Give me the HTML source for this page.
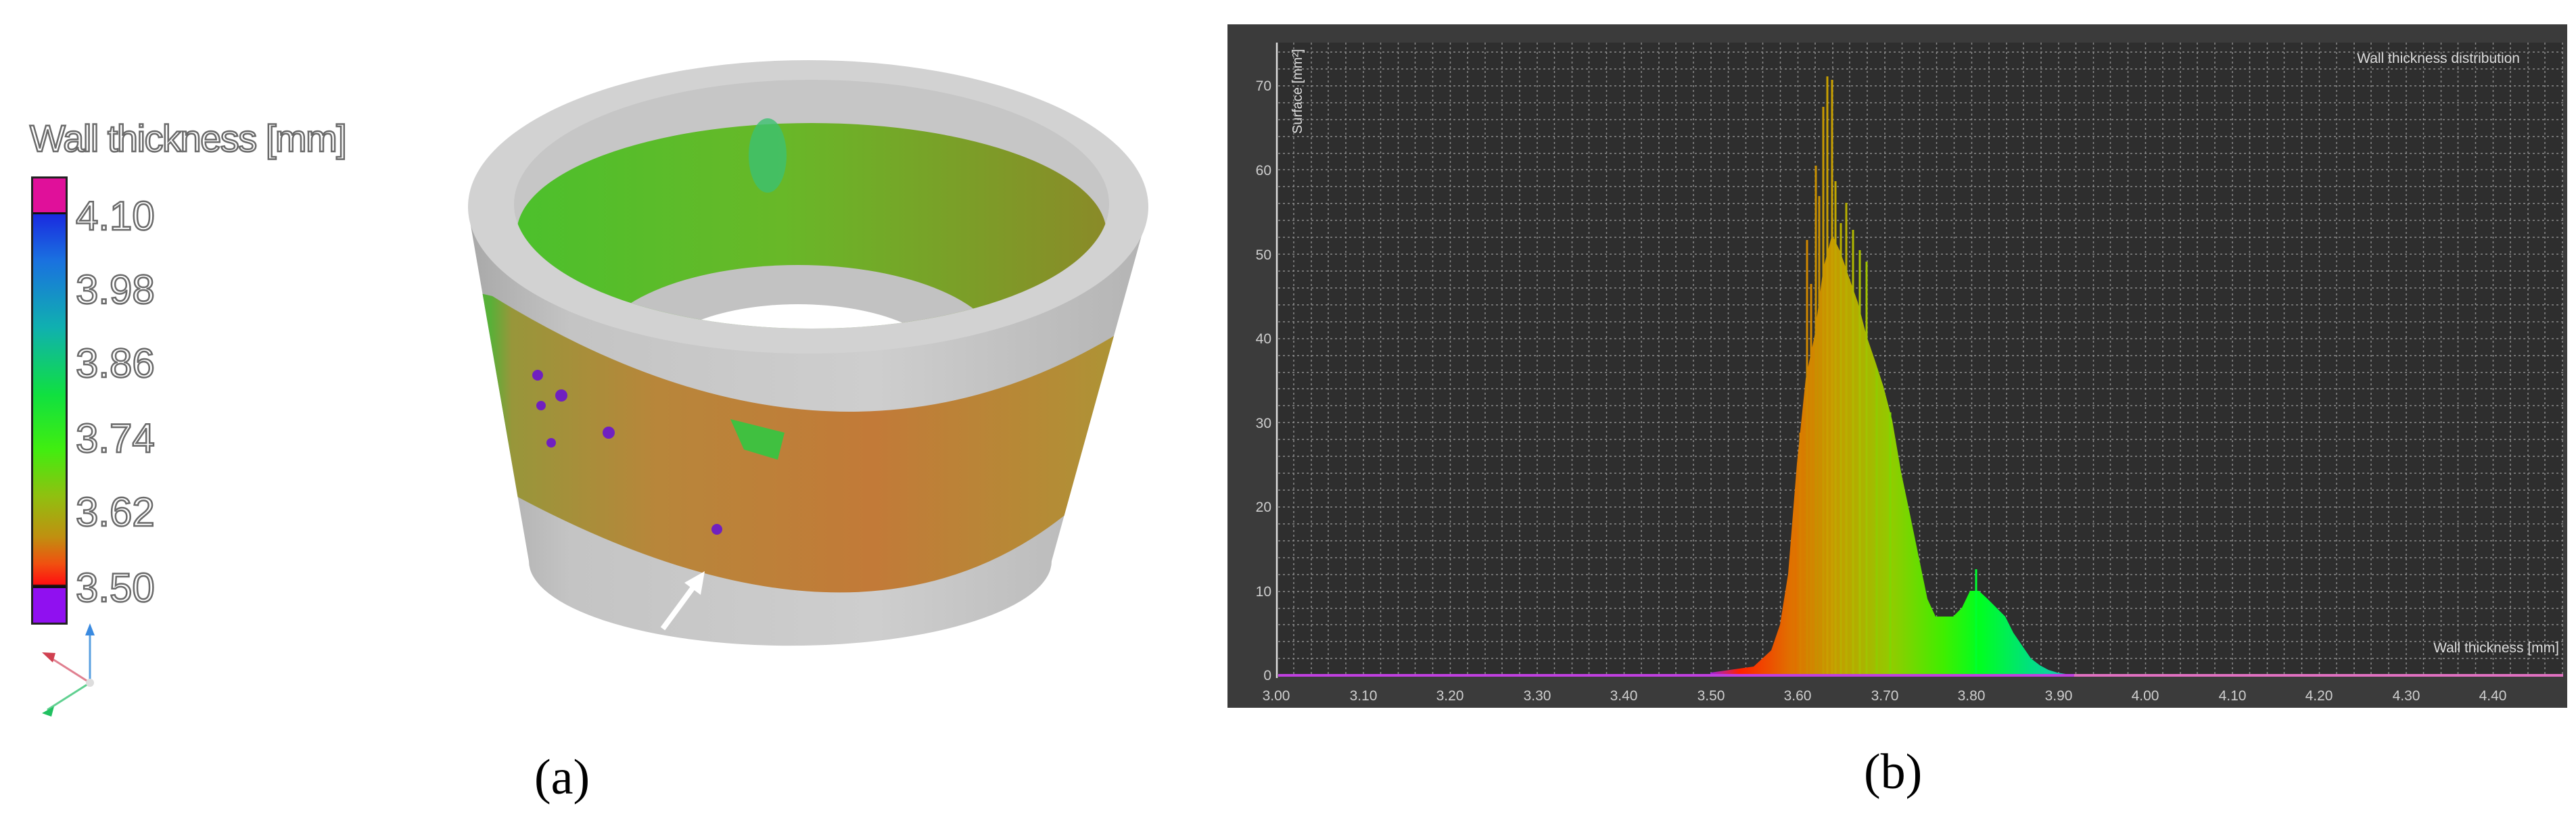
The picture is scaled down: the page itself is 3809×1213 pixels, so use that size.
<!DOCTYPE html>
<html><head><meta charset="utf-8"><style>
html,body{margin:0;padding:0;background:#fff;}
body{width:3809px;height:1213px;position:relative;overflow:hidden;font-family:"Liberation Sans",sans-serif;}
.t{position:absolute;color:#fff;-webkit-text-stroke:2.5px #6a6a6a;font-family:"Liberation Sans",sans-serif;white-space:nowrap;}
.cap{position:absolute;font-family:"Liberation Serif",serif;font-size:74px;color:#000;}
</style></head><body>

<div class="t" style="left:44px;top:172px;font-size:56px;letter-spacing:-1.5px;">Wall thickness [mm]</div>
<div style="position:absolute;left:46px;top:261px;width:48px;height:657px;border:3px solid #222;background:linear-gradient(#e0109a 0,#e0109a 50px,#111 50px,#111 53px,#1a2ae0 53px,#1a70e0 120px,#10b0b0 220px,#10e040 320px,#40ee10 400px,#90c010 470px,#c09010 530px,#f05010 570px,#ff1010 600px,#111 602px,#111 606px,#9010f0 606px);"></div>
<div class="t" style="left:112px;top:285px;font-size:60px;">4.10</div>
<div class="t" style="left:112px;top:394px;font-size:60px;">3.98</div>
<div class="t" style="left:112px;top:503px;font-size:60px;">3.86</div>
<div class="t" style="left:112px;top:614px;font-size:60px;">3.74</div>
<div class="t" style="left:112px;top:723px;font-size:60px;">3.62</div>
<div class="t" style="left:112px;top:835px;font-size:60px;">3.50</div>

<svg width="3809" height="1213" style="position:absolute;left:0;top:0">
<defs>
<clipPath id="body"><path d="M693,316 L782,830 A386,125 0 0 0 1555,830 L1697,316 Z"/></clipPath>
<clipPath id="inner"><ellipse cx="1200" cy="302" rx="440" ry="184"/></clipPath>
<linearGradient id="band" x1="0" x2="1" y1="0" y2="0">
<stop offset="0" stop-color="#4cb838"/><stop offset="0.07" stop-color="#58b038"/><stop offset="0.1" stop-color="#98963a"/><stop offset="0.3" stop-color="#b8863a"/><stop offset="0.6" stop-color="#c27a38"/><stop offset="0.85" stop-color="#b48c36"/><stop offset="1" stop-color="#a89a34"/>
</linearGradient>
<linearGradient id="inw" x1="0" x2="1" y1="0" y2="0">
<stop offset="0" stop-color="#4cc02c"/><stop offset="0.45" stop-color="#68b828"/><stop offset="1" stop-color="#8a8a28"/>
</linearGradient>
<linearGradient id="side" x1="0" x2="1" y1="0" y2="0">
<stop offset="0" stop-color="#a8a8a8"/><stop offset="0.15" stop-color="#c4c4c4"/><stop offset="0.6" stop-color="#cecece"/><stop offset="1" stop-color="#b4b4b4"/>
</linearGradient>
<linearGradient id="hist" gradientUnits="userSpaceOnUse" x1="2529" x2="3067" y1="0" y2="0">
<stop offset="0" stop-color="#a020e0"/><stop offset="0.08" stop-color="#ff2000"/><stop offset="0.22" stop-color="#e07000"/><stop offset="0.36" stop-color="#c0a000"/><stop offset="0.5" stop-color="#90cc00"/><stop offset="0.64" stop-color="#40ee00"/><stop offset="0.74" stop-color="#00ff20"/><stop offset="0.88" stop-color="#00e080"/><stop offset="1" stop-color="#20c0c0"/>
</linearGradient>
</defs>

<!-- cylinder -->
<path d="M693,316 L782,830 A386,125 0 0 0 1555,830 L1697,316 Z" fill="url(#side)"/>
<g clip-path="url(#body)">
<path d="M650,420 L728,438 Q1239,754 1665,486 L1720,470 L1720,770 L1577,760 Q1269,1007 756,730 L650,720 Z" fill="url(#band)"/>
<circle cx="1060" cy="783" r="8" fill="#7020c0"/><circle cx="795" cy="555" r="8" fill="#7020c0"/><circle cx="830" cy="585" r="9" fill="#7020c0"/><circle cx="800" cy="600" r="7" fill="#7020c0"/><circle cx="900" cy="640" r="9" fill="#7020c0"/><circle cx="815" cy="655" r="7" fill="#7020c0"/>
<path d="M1080,620 L1160,640 L1150,680 L1100,665 Z" fill="#40c040"/>
</g>
<ellipse cx="1195" cy="306" rx="503" ry="217" fill="#d2d2d2"/>
<g clip-path="url(#inner)">
<rect x="750" y="110" width="900" height="400" fill="#c6c6c6"/>
<ellipse cx="1200" cy="345" rx="436" ry="163" fill="url(#inw)"/>
<ellipse cx="1180" cy="522" rx="300" ry="130" fill="#c2c2c2"/>
<ellipse cx="1180" cy="545" rx="220" ry="95" fill="#ffffff"/>
</g>
<ellipse cx="1135" cy="230" rx="28" ry="55" fill="#3cc070" opacity="0.8"/>
<line x1="980" y1="930" x2="1030" y2="862" stroke="#fff" stroke-width="8"/>
<path d="M1042,845 L1012,862 L1036,880 Z" fill="#fff"/>

<!-- triad -->
<line x1="133" y1="1010" x2="133" y2="930" stroke="#5aa0e0" stroke-width="3"/>
<path d="M133,922 L126,940 L140,940 Z" fill="#3a8ae0"/>
<line x1="133" y1="1010" x2="70" y2="970" stroke="#e08090" stroke-width="3"/>
<path d="M62,965 L78,980 L82,966 Z" fill="#d04050"/>
<line x1="133" y1="1010" x2="70" y2="1050" stroke="#60d090" stroke-width="3"/>
<path d="M62,1055 L80,1045 L76,1060 Z" fill="#20c060"/>
<circle cx="133" cy="1010" r="6" fill="#ddd"/>

<!-- chart -->
<rect x="1815" y="36" width="1981" height="1011" fill="#3b3b3b"/>
<rect x="1890" y="63" width="1900" height="936" fill="#2e2e2e"/>
<g stroke="#8a8a8a" stroke-width="1.5" stroke-dasharray="3,4">
<line x1="1890" x2="3790" y1="974" y2="974"/><line x1="1890" x2="3790" y1="949" y2="949"/><line x1="1890" x2="3790" y1="924" y2="924"/><line x1="1890" x2="3790" y1="900" y2="900"/><line x1="1890" x2="3790" y1="875" y2="875"/><line x1="1890" x2="3790" y1="850" y2="850"/><line x1="1890" x2="3790" y1="825" y2="825"/><line x1="1890" x2="3790" y1="800" y2="800"/><line x1="1890" x2="3790" y1="775" y2="775"/><line x1="1890" x2="3790" y1="750" y2="750"/><line x1="1890" x2="3790" y1="725" y2="725"/><line x1="1890" x2="3790" y1="700" y2="700"/><line x1="1890" x2="3790" y1="675" y2="675"/><line x1="1890" x2="3790" y1="650" y2="650"/><line x1="1890" x2="3790" y1="625" y2="625"/><line x1="1890" x2="3790" y1="600" y2="600"/><line x1="1890" x2="3790" y1="575" y2="575"/><line x1="1890" x2="3790" y1="551" y2="551"/><line x1="1890" x2="3790" y1="526" y2="526"/><line x1="1890" x2="3790" y1="501" y2="501"/><line x1="1890" x2="3790" y1="476" y2="476"/><line x1="1890" x2="3790" y1="451" y2="451"/><line x1="1890" x2="3790" y1="426" y2="426"/><line x1="1890" x2="3790" y1="401" y2="401"/><line x1="1890" x2="3790" y1="376" y2="376"/><line x1="1890" x2="3790" y1="351" y2="351"/><line x1="1890" x2="3790" y1="326" y2="326"/><line x1="1890" x2="3790" y1="301" y2="301"/><line x1="1890" x2="3790" y1="276" y2="276"/><line x1="1890" x2="3790" y1="251" y2="251"/><line x1="1890" x2="3790" y1="227" y2="227"/><line x1="1890" x2="3790" y1="202" y2="202"/><line x1="1890" x2="3790" y1="177" y2="177"/><line x1="1890" x2="3790" y1="152" y2="152"/><line x1="1890" x2="3790" y1="127" y2="127"/><line x1="1890" x2="3790" y1="102" y2="102"/><line x1="1890" x2="3790" y1="77" y2="77"/>
</g>
<g stroke="#8a8a8a" stroke-width="1.5" stroke-dasharray="3,4" id="vg">
<line y1="63" y2="999" x1="1913" x2="1913"/><line y1="63" y2="999" x1="1939" x2="1939"/><line y1="63" y2="999" x1="1964" x2="1964"/><line y1="63" y2="999" x1="1990" x2="1990"/><line y1="63" y2="999" x1="2016" x2="2016"/>
</g>
<use href="#vg" x="128.5"/><use href="#vg" x="257"/><use href="#vg" x="385.5"/><use href="#vg" x="514"/><use href="#vg" x="642.5"/><use href="#vg" x="771"/><use href="#vg" x="899.5"/><use href="#vg" x="1028"/><use href="#vg" x="1156.5"/><use href="#vg" x="1285"/><use href="#vg" x="1413.5"/><use href="#vg" x="1542"/><use href="#vg" x="1670.5"/><use href="#vg" x="1799"/>

<!-- histogram -->
<path fill="url(#hist)" d="M2529,999 L2529,995 L2593,986 L2619,962 L2632,924 L2644,849 L2657,686 L2670,560 L2683,497 L2696,397 L2709,347 L2721,372 L2734,410 L2747,447 L2760,497 L2773,535 L2785,572 L2798,622 L2811,698 L2824,760 L2837,823 L2850,886 L2862,912 L2888,912 L2901,899 L2913,874 L2926,874 L2939,886 L2952,899 L2965,912 L2977,936 L2990,955 L3003,974 L3016,984 L3029,991 L3042,995 L3067,999 Z"/>
<g stroke-width="3">
<line x1="2702" y1="999" x2="2702" y2="113" stroke="#c8a000"/><line x1="2709" y1="999" x2="2709" y2="118" stroke="#c8a000"/><line x1="2696" y1="999" x2="2696" y2="158" stroke="#c89a00"/><line x1="2685" y1="999" x2="2685" y2="245" stroke="#c89000"/><line x1="2714" y1="999" x2="2714" y2="268" stroke="#c0a800"/><line x1="2672" y1="999" x2="2672" y2="355" stroke="#d08800"/><line x1="2722" y1="999" x2="2722" y2="330" stroke="#b8b000"/><line x1="2750" y1="999" x2="2750" y2="370" stroke="#a8c000"/><line x1="2760" y1="999" x2="2760" y2="387" stroke="#a0c400"/><line x1="2662" y1="999" x2="2662" y2="640" stroke="#d88000"/><line x1="2655" y1="999" x2="2655" y2="780" stroke="#e07000"/><line x1="2775" y1="999" x2="2775" y2="545" stroke="#90cc00"/><line x1="2795" y1="999" x2="2795" y2="610" stroke="#80d800"/><line x1="2922" y1="999" x2="2922" y2="842" stroke="#00ff30"/><line x1="2730" y1="999" x2="2730" y2="300" stroke="#b8b000"/><line x1="2740" y1="999" x2="2740" y2="340" stroke="#b0b800"/><line x1="2690" y1="999" x2="2690" y2="290" stroke="#c89000"/><line x1="2678" y1="999" x2="2678" y2="420" stroke="#d08800"/>
</g>
<line x1="1890" x2="3790" y1="999" y2="999" stroke="#c040e0" stroke-width="4"/>
<line x1="3067" x2="3790" y1="999" y2="999" stroke="#e070c0" stroke-width="4"/>
<line x1="1888" x2="1888" y1="63" y2="1003" stroke="#ddd" stroke-width="2.5"/>
<g fill="#cfcfcf" font-family="Liberation Sans, sans-serif" font-size="21" text-anchor="end">
<text x="1880" y="1006">0</text><text x="1880" y="882">10</text><text x="1880" y="757">20</text><text x="1880" y="633">30</text><text x="1880" y="508">40</text><text x="1880" y="384">50</text><text x="1880" y="259">60</text><text x="1880" y="134">70</text>
</g>
<g fill="#cfcfcf" font-family="Liberation Sans, sans-serif" font-size="21" text-anchor="middle">
<text x="1887" y="1036">3.00</text><text x="2016" y="1036">3.10</text><text x="2144" y="1036">3.20</text><text x="2273" y="1036">3.30</text><text x="2401" y="1036">3.40</text><text x="2530" y="1036">3.50</text><text x="2658" y="1036">3.60</text><text x="2787" y="1036">3.70</text><text x="2915" y="1036">3.80</text><text x="3044" y="1036">3.90</text><text x="3172" y="1036">4.00</text><text x="3301" y="1036">4.10</text><text x="3429" y="1036">4.20</text><text x="3558" y="1036">4.30</text><text x="3686" y="1036">4.40</text>
</g>
<text x="3726" y="93" fill="#ddd" font-family="Liberation Sans, sans-serif" font-size="21" text-anchor="end">Wall thickness distribution</text>
<text x="3784" y="965" fill="#ddd" font-family="Liberation Sans, sans-serif" font-size="21" text-anchor="end">Wall thickness [mm]</text>
<text transform="translate(1925,198) rotate(-90)" fill="#ddd" font-family="Liberation Sans, sans-serif" font-size="20">Surface [mm²]</text>
</svg>

<div class="cap" style="left:790px;top:1108px;">(a)</div>
<div class="cap" style="left:2756px;top:1100px;">(b)</div>
</body></html>
